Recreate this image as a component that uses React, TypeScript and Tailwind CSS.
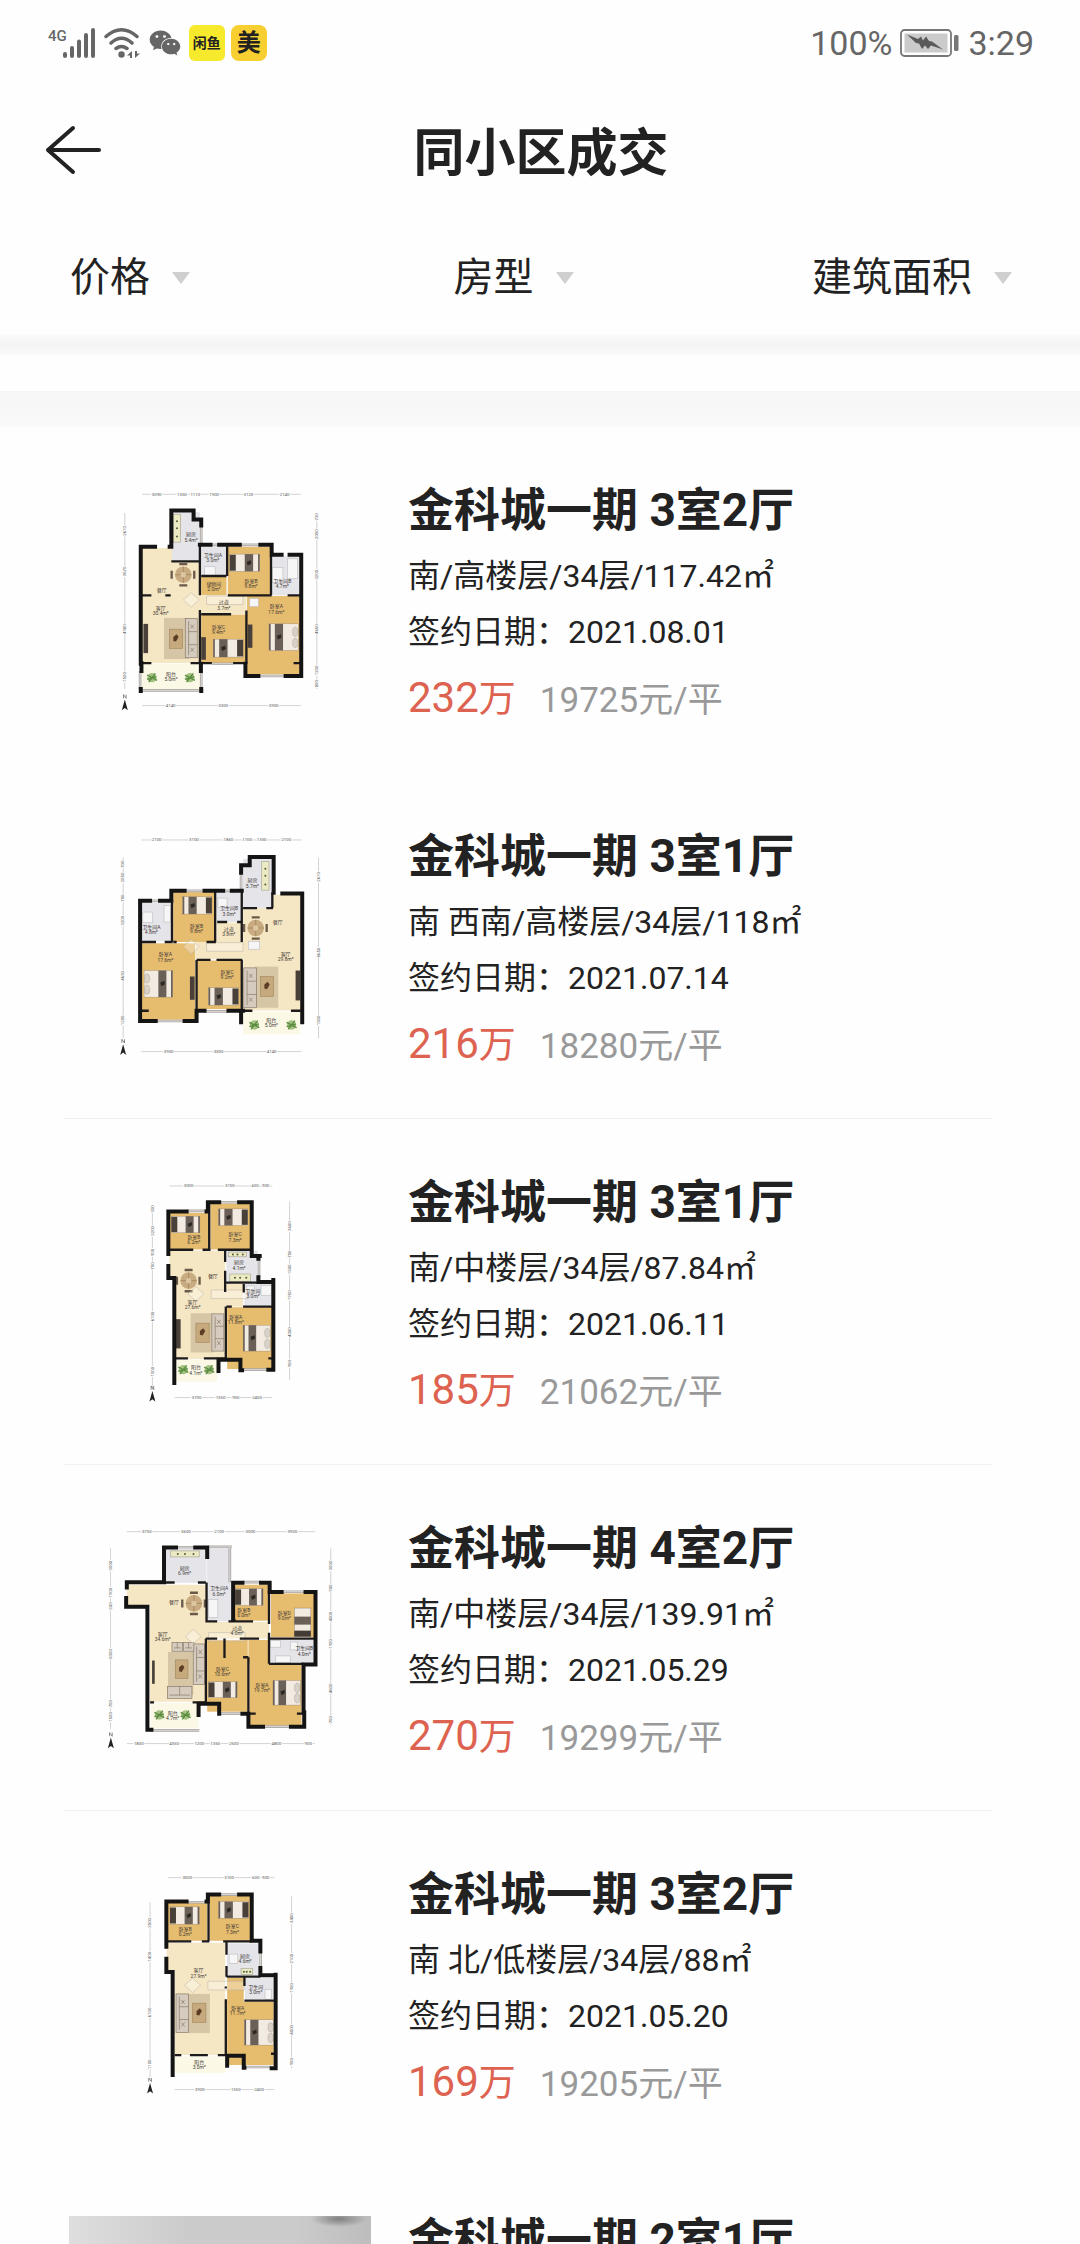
import { FaWeixin } from 'react-icons/fa'

type Box = [x: number, y: number, w: number, h: number]

type Plan = {
  viewBox: string
  // floor areas by finish
  living: Box[]
  wood: Box[]
  tile: Box[]
  balcony: Box[]
  walls: string
  thinWalls: string
  windows: string
  rugs: Box[]
  tables: Box[]
  sofas: Box[]
  // x, y, w, h and the side that the pillows are on
  beds: [number, number, number, number, 'l' | 'r' | 'b'][]
  counters: Box[]
  fittings: Box[]
  dining: [number, number][]
  plants: [number, number][]
  tvs: Box[]
  labels: [number, number, string, string?][]
  dims: string
  dimText: [number, number, string, boolean?][]
  north: [number, number]
  watermark: [number, number]
}

const plans: Record<string, Plan> = {
  a: {
    viewBox: '-96 45 909 684',
    living: [[124, 232, 178, 346], [300, 376, 138, 54]],
    wood: [[302, 318, 76, 56], [382, 228, 130, 146], [302, 432, 136, 148], [440, 376, 162, 236]],
    tile: [[214, 124, 84, 150], [302, 228, 76, 88], [512, 256, 86, 118]],
    balcony: [[122, 580, 178, 78]],
    walls:
      'M120 580V228H163M207 228H212V119H279V146H302V164M298 222H330M356 222H418M480 222H514V252H544M568 252H603V617H556M474 617H435V580M301 580V602M122 578V602M120 656V662M302 656V662',
    thinWalls:
      'M212 272H298M298 222V374M298 418V580M302 316H378M380 226V316M382 374H514M512 256V374M302 431H392M438 420V580M302 578H334M398 578H438M124 374H152M194 374H210M580 578H602M440 374H468M562 374H602M124 578H152M270 578H300',
    windows: 'M120 660H302M330 222H356M418 222H480M302 164V218M474 617H556M334 580H398M118 602V656M302 602V656',
    rugs: [[190, 442, 76, 124]],
    tables: [[206, 476, 40, 58]],
    sofas: [[254, 444, 36, 118]],
    beds: [[388, 250, 90, 52, 'l'], [338, 506, 90, 54, 'r'], [506, 460, 88, 80, 'r']],
    counters: [[218, 130, 22, 84]],
    fittings: [[312, 288, 32, 26], [516, 290, 32, 46], [562, 264, 30, 60], [448, 384, 26, 24]],
    dining: [[248, 312]],
    plants: [[154, 622], [268, 622]],
    tvs: [[128, 460, 14, 88], [302, 500, 14, 68], [442, 462, 14, 70]],
    labels: [
      [271, 192, '厨房', '5.4m²'],
      [337, 254, '卫生间A', '3.0m²'],
      [183, 358, '餐厅'],
      [180, 412, '客厅', '30.4m²'],
      [340, 340, '储物间', '2.0m²'],
      [370, 396, '过道', '3.7m²'],
      [452, 332, '卧室B', '9.8m²'],
      [546, 332, '卫生间B', '4.7m²'],
      [528, 408, '卧室A', '17.6m²'],
      [354, 470, '卧室C', '9.4m²'],
      [211, 612, '阳台', '5.0m²'],
    ],
    dims: 'M124 70H602M124 706H602M72 126V656M650 126V656',
    dimText: [
      [168, 70, '3090'], [244, 70, '1350'], [284, 70, '1110'], [341, 70, '1900'], [444, 70, '3120'], [553, 70, '2140'],
      [210, 706, '4140'], [368, 706, '3300'], [520, 706, '3900'],
      [72, 180, '2610', true], [72, 302, '3670', true], [72, 476, '4980', true], [72, 620, '1500', true],
      [650, 138, '730', true], [650, 190, '2050', true], [650, 312, '3200', true], [650, 476, '4650', true], [650, 600, '1200', true], [650, 640, '800', true],
    ],
    north: [72, 706],
    watermark: [272, 388],
  },
  b: {
    viewBox: '-96 33 909 684',
    living: [[428, 222, 176, 348], [286, 364, 144, 52], [348, 306, 76, 62]],
    wood: [[218, 214, 124, 150], [122, 368, 162, 230], [290, 420, 134, 146]],
    tile: [[428, 114, 88, 148], [120, 244, 92, 118], [348, 214, 76, 90]],
    balcony: [[428, 574, 172, 68]],
    walls:
      'M422 156V133H448V108H520V216M546 218H606V606M118 364V240H148M178 240H212V210H252M312 210H368M394 210H424M118 362V602H165M252 602H288V571H312M384 571H422V606M422 571H428',
    thinWalls:
      'M428 262H470M498 262H518M516 214V262M424 210V364M344 212V364M218 364H228M214 236V364M318 364H346M120 364H166M192 364H216M288 418H330M348 418H426M288 418V570M424 418V570M350 304H380M410 304H424M122 571H144M428 571H456M572 571H602',
    windows: 'M422 156V206M252 210H312M148 240H178M368 210H394M165 602H252M312 573H384',
    rugs: [[464, 438, 70, 124]],
    tables: [[480, 468, 40, 60]],
    sofas: [[430, 442, 38, 120]],
    beds: [[246, 228, 88, 52, 'r'], [324, 502, 90, 52, 'r'], [130, 450, 86, 80, 'l']],
    counters: [[484, 122, 22, 86]],
    fittings: [[126, 274, 30, 32], [190, 254, 20, 50], [352, 232, 28, 28], [444, 362, 34, 24]],
    dining: [[466, 322]],
    plants: [[462, 614], [574, 614]],
    tvs: [[586, 450, 14, 90], [268, 468, 14, 70]],
    labels: [
      [456, 180, '厨房', '5.7m²'],
      [386, 264, '卫生间B', '3.0m²'],
      [532, 304, '餐厅'],
      [385, 326, '过道', '3.8m²'],
      [288, 316, '卧室B', '9.8m²'],
      [152, 320, '卫生间A', '4.8m²'],
      [194, 402, '卧室A', '17.6m²'],
      [380, 456, '卧室C', '9.2m²'],
      [556, 400, '客厅', '29.8m²'],
      [513, 600, '阳台', '5.0m²'],
    ],
    dims: 'M122 57H604M122 694H604M67 110V654M655 110V654',
    dimText: [
      [168, 57, '2100'], [280, 57, '3100'], [384, 57, '1860'], [440, 57, '1100'], [484, 57, '1350'], [558, 57, '2100'],
      [204, 694, '3900'], [354, 694, '3300'], [514, 694, '4140'],
      [67, 130, '700', true], [67, 170, '2050', true], [67, 232, '700', true], [67, 300, '3200', true], [67, 466, '4650', true], [67, 600, '1200', true],
      [655, 168, '2610', true], [655, 396, '8650', true], [655, 600, '1500', true],
    ],
    north: [67, 690],
    watermark: [272, 378],
  },
  c: {
    viewBox: '-96 51 909 684',
    living: [[222, 270, 152, 326], [206, 270, 24, 84], [374, 370, 54, 68]],
    wood: [[208, 156, 116, 110], [330, 128, 122, 138], [380, 440, 136, 186]],
    tile: [[378, 270, 94, 96], [432, 370, 84, 66]],
    balcony: [[226, 598, 124, 66]],
    walls:
      'M203 280V152H258M318 152H322V124H356M416 124H454V286H478M474 286V294M474 350V364H516M203 316V352H221V668M519 358V628H504M425 630H420V598H354V632',
    thinWalls:
      'M206 267H278M306 267H330M326 128V267M352 267H454M374 267V304M374 330V394M376 366H474M378 438H394M428 438H516M430 370V396M376 438V596M226 594H262M310 594H376M504 594H518',
    windows: 'M258 150H322M356 124H416M476 294V350M425 628H504M484 362H516',
    rugs: [[270, 458, 72, 118]],
    tables: [[286, 488, 40, 58]],
    sofas: [[334, 460, 36, 112]],
    beds: [[212, 166, 86, 50, 'l'], [354, 144, 88, 50, 'r'], [428, 494, 82, 78, 'r']],
    counters: [[388, 340, 62, 22], [384, 274, 54, 14]],
    fittings: [[482, 374, 32, 30], [438, 376, 24, 20]],
    dining: [[264, 360]],
    plants: [[248, 628], [326, 628]],
    tvs: [[226, 476, 14, 88]],
    labels: [
      [280, 230, '卧室B', '6.2m²'],
      [404, 222, '卧室C', '7.3m²'],
      [416, 306, '厨房', '4.1m²'],
      [337, 348, '餐厅'],
      [276, 424, '客厅', '27.6m²'],
      [458, 392, '卫生间', '3.0m²'],
      [406, 470, '卧室A', '11.8m²'],
      [286, 622, '阳台', '4.1m²'],
    ],
    dims: 'M206 75H516M222 712H516M155 134V688M568 122V660',
    dimText: [
      [264, 75, '3000'], [388, 75, '3100'], [464, 75, '600'], [496, 75, '900'],
      [288, 712, '3700'], [360, 712, '1350'], [406, 712, '900'], [470, 712, '2400'],
      [155, 144, '300', true], [155, 210, '3200', true], [155, 275, '900', true], [155, 316, '700', true], [155, 468, '6100', true], [155, 634, '1500', true],
      [568, 196, '3600', true], [568, 280, '700', true], [568, 326, '1500', true], [568, 404, '1950', true], [568, 515, '4000', true], [568, 610, '900', true],
    ],
    north: [155, 710],
    watermark: [286, 400],
  },
  d: {
    viewBox: '-66 39 909 684',
    living: [[178, 222, 170, 352], [108, 222, 74, 62], [346, 334, 190, 50]],
    wood: [[428, 222, 106, 108], [542, 248, 130, 132], [350, 388, 122, 216], [474, 388, 62, 70], [478, 440, 156, 206]],
    tile: [[226, 114, 122, 102], [350, 114, 72, 218], [538, 388, 134, 70]],
    balcony: [[180, 578, 144, 76]],
    walls:
      'M108 230V214H220V110H256M314 110H350V138M106 262V288H170V658H182M428 328V216H456M512 216H538V244H574M646 244H676V462H640V606M642 606V649H602M518 649H474V610M472 610H456M386 610V580H348M324 580V614M386 580H324',
    thinWalls:
      'M222 215H252M322 215H346M348 215V332H380M414 332H488M536 240V340M536 366V460M538 384H674M346 384V580M346 384H380M402 384V442M448 384H506M458 440H474M474 440V610M536 460H640M178 576H190M306 576H346M620 610H640M478 610H496M428 330H436',
    windows: 'M256 109H314M352 108H424M418 108V214M456 214H512M574 243H646M518 649H602M386 610H456M182 660H326',
    rugs: [[232, 424, 76, 130]],
    tables: [[254, 448, 38, 56]],
    sofas: [[308, 400, 34, 122], [244, 396, 32, 26], [278, 396, 32, 26], [230, 528, 74, 36]],
    beds: [[434, 234, 84, 50, 'l'], [354, 514, 86, 48, 'l'], [612, 292, 50, 86, 'b'], [548, 510, 82, 74, 'r']],
    counters: [[240, 120, 86, 18]],
    fittings: [[354, 266, 28, 54], [540, 390, 30, 20], [556, 436, 44, 20], [600, 394, 22, 24]],
    dining: [[310, 278]],
    plants: [[206, 614], [285, 614]],
    tvs: [[184, 450, 8, 70]],
    labels: [
      [282, 172, '厨房', '6.9m²'],
      [386, 234, '卫生间A', '6.0m²'],
      [460, 298, '卧室B', '6.0m²'],
      [582, 308, '卧室D', '9.0m²'],
      [250, 274, '餐厅'],
      [216, 370, '客厅', '34.6m²'],
      [440, 352, '过道', '4.0m²'],
      [642, 414, '卫生间B', '4.0m²'],
      [396, 476, '卧室C', '10.6m²'],
      [515, 524, '卧室A', '19.7m²'],
      [246, 608, '阳台', '4.7m²'],
    ],
    dims: 'M108 62H674M108 700H674M59 112V656M722 112V644',
    dimText: [
      [168, 62, '3750'], [286, 62, '3600'], [386, 62, '2100'], [480, 62, '3000'], [606, 62, '3900'],
      [144, 700, '1800'], [250, 700, '4350'], [326, 700, '1200'], [374, 700, '1350'], [430, 700, '2500'], [558, 700, '4800'], [654, 700, '900'],
      [59, 164, '3000', true], [59, 246, '1900', true], [59, 286, '300', true], [59, 430, '8300', true], [59, 580, '700', true], [59, 620, '1500', true],
      [722, 164, '3000', true], [722, 232, '900', true], [722, 318, '4000', true], [722, 400, '1900', true], [722, 534, '4600', true], [722, 628, '700', true],
    ],
    north: [60, 700],
    watermark: [308, 378],
  },
  e: {
    viewBox: '-96 27 909 684',
    living: [[222, 246, 152, 338], [198, 246, 30, 84]],
    wood: [[202, 126, 118, 114], [328, 104, 122, 136], [380, 352, 50, 76], [380, 424, 140, 190]],
    tile: [[380, 248, 96, 96], [434, 352, 88, 64]],
    balcony: [[222, 588, 154, 50]],
    walls:
      'M197 258V122H258M318 122H322V101H356M416 101H454V240H480V272M480 322V344H522M197 294V334H216V644M526 342V624H514M432 622H430V586H380V616',
    thinWalls:
      'M200 242H272M304 242H326M324 104V242M368 242H454M378 242V282M378 316V348M378 348H480M376 378V384M376 416V586M432 350V376M432 420H522M222 584H242M268 584H322M352 584H378M512 580H524',
    windows: 'M258 124H322M356 101H416M481 272V322M432 620H514M490 344H522',
    rugs: [[262, 400, 66, 118]],
    tables: [[276, 428, 40, 58]],
    sofas: [[226, 400, 38, 116]],
    beds: [[208, 138, 88, 52, 'l'], [354, 122, 90, 50, 'r'], [432, 478, 88, 76, 'r']],
    counters: [[422, 324, 34, 18]],
    fittings: [[386, 280, 26, 28], [494, 386, 20, 30]],
    dining: [],
    plants: [],
    tvs: [],
    labels: [
      [254, 206, '卧室B', '6.2m²'],
      [396, 198, '卧室C', '7.3m²'],
      [434, 286, '厨房', '4.6m²'],
      [294, 330, '客厅', '27.9m²'],
      [466, 380, '卫生间', '3.0m²'],
      [412, 444, '卧室A', '11.7m²'],
      [296, 606, '阳台', '3.0m²'],
    ],
    dims: 'M202 50H522M222 688H522M148 124V650M574 106V624',
    dimText: [
      [260, 50, '3000'], [386, 50, '3100'], [466, 50, '600'], [496, 50, '900'],
      [298, 688, '3900'], [406, 688, '1350'], [476, 688, '2400'],
      [148, 186, '3000', true], [148, 288, '1400', true], [148, 456, '6100', true], [148, 612, '1100', true],
      [574, 172, '3400', true], [574, 294, '2100', true], [574, 382, '1900', true], [574, 508, '4000', true], [574, 604, '900', true],
    ],
    north: [148, 686],
    watermark: [276, 374],
  },
}

const listings = [
  { id: 1, title: '金科城一期 3室2厅', info: '南/高楼层/34层/117.42㎡', date: '2021.08.01', total: '232', unit: '19725', plan: 'a', divider: false },
  { id: 2, title: '金科城一期 3室1厅', info: '南 西南/高楼层/34层/118㎡', date: '2021.07.14', total: '216', unit: '18280', plan: 'b', divider: true },
  { id: 3, title: '金科城一期 3室1厅', info: '南/中楼层/34层/87.84㎡', date: '2021.06.11', total: '185', unit: '21062', plan: 'c', divider: true },
  { id: 4, title: '金科城一期 4室2厅', info: '南/中楼层/34层/139.91㎡', date: '2021.05.29', total: '270', unit: '19299', plan: 'd', divider: true },
  { id: 5, title: '金科城一期 3室2厅', info: '南 北/低楼层/34层/88㎡', date: '2021.05.20', total: '169', unit: '19205', plan: 'e', divider: false },
]

const filters = ['价格', '房型', '建筑面积']

function Rects({ items, fill, stroke }: { items: Box[]; fill: string; stroke?: string }) {
  return items.map(([x, y, w, h]) => (
    <rect key={`${x}-${y}`} x={x} y={y} width={w} height={h} fill={fill} stroke={stroke} strokeWidth={stroke ? 2 : 0} />
  ))
}

function Bed({ x, y, w, h, side }: { x: number; y: number; w: number; h: number; side: 'l' | 'r' | 'b' }) {
  if (side === 'b') {
    return (
      <g>
        <rect x={x} y={y} width={w} height={h} fill="#f1ebe2" stroke="#6b5f52" strokeWidth="1" />
        <rect x={x} y={y + h * 0.3} width={w} height={h * 0.28} fill="#6a6057" />
        <rect x={x} y={y + h - 18} width={w} height="18" fill="#433b35" />
      </g>
    )
  }
  const wide = h > 60
  const pillow = side === 'l' ? x : x + w - 18
  const blanket = side === 'l' ? x + w * 0.5 : x + w * 0.2
  return (
    <g>
      <rect x={x} y={y} width={w} height={h} fill="#f1ebe2" stroke="#8a7a66" strokeWidth="1" />
      <rect x={blanket} y={y} width={w * 0.28} height={h} fill="#6a6057" />
      <rect x={side === 'l' ? x + w - 5 : x} y={y} width="5" height={h} fill="#6a6057" />
      {wide ? (
        <>
          <ellipse cx={pillow + 9} cy={y + h * 0.3} rx="8" ry="14" fill="#d9d2c8" stroke="#8f8578" />
          <ellipse cx={pillow + 9} cy={y + h * 0.72} rx="8" ry="14" fill="#d9d2c8" stroke="#8f8578" />
        </>
      ) : (
        <rect x={pillow} y={y + 2} width="18" height={h - 4} fill="#4a403a" />
      )}
      <path d={`M${blanket + 6} ${y + h * 0.45}l12 -5 2 10 -11 6z`} fill="#2c2825" />
    </g>
  )
}

function FloorPlan({ plan, title }: { plan: Plan; title: string }) {
  const [nx, ny] = plan.north
  const [mx, my] = plan.watermark
  return (
    <svg viewBox={plan.viewBox} role="img" aria-label={`${title} 户型图`} className="block w-full">
      <Rects items={plan.living} fill="#f6e7c4" />
      <Rects items={plan.wood} fill="#e6bc6e" />
      <Rects items={plan.tile} fill="#e4e4e9" />
      <Rects items={plan.balcony} fill="#fbf8e6" />
      <Rects items={plan.rugs} fill="#d6c6a6" />
      <Rects items={plan.tables} fill="#c6aa7e" stroke="#a58a60" />
      {plan.tables.map(([x, y, w, h]) => (
        <path key={x} d={`M${x + w * 0.3} ${y + h * 0.4}l10 -8 6 8 -8 14 -8 -2z`} fill="#5b3d26" />
      ))}
      <Rects items={plan.sofas} fill="#d6cbbf" stroke="#857767" />
      {plan.sofas.map(([x, y, w, h]) => (
        <path
          key={`${x}-${y}`}
          d={
            h > w
              ? `M${x + 10} ${y + 8}V${y + h - 8}M${x + 10} ${y + h / 3}h${w - 10}M${x + 10} ${y + (h * 2) / 3}h${w - 10}M${x + 16} ${y + 18}l10 12m0 -12l-10 12M${x + 16} ${y + h - 30}l10 12m0 -12l-10 12`
              : `M${x + 6} ${y + h - 10}h${w - 12}M${x + w / 2} ${y}v${h - 10}`
          }
          fill="none"
          stroke="#857767"
          strokeWidth="2"
        />
      ))}
      {plan.beds.map(([x, y, w, h, side]) => (
        <Bed key={`${x}-${y}`} x={x} y={y} w={w} h={h} side={side} />
      ))}
      <Rects items={plan.counters} fill="#eceac2" stroke="#a9a690" />
      {plan.counters.map(([x, y, w, h]) => (
        <g key={`${x}-${y}`} fill="#4f5b3c">
          <circle cx={x + w * 0.5} cy={y + h * 0.5} r="3" />
          <circle cx={h > w ? x + w * 0.5 : x + w * 0.25} cy={h > w ? y + h * 0.25 : y + h * 0.5} r="3" />
          <circle cx={h > w ? x + w * 0.5 : x + w * 0.8} cy={h > w ? y + h * 0.8 : y + h * 0.5} r="3" />
        </g>
      ))}
      <Rects items={plan.fittings} fill="#f6f6f6" stroke="#c0c0c4" />
      {plan.dining.map(([x, y]) => (
        <g key={x}>
          <path d={`M${x - 12} ${y - 32}h24M${x - 12} ${y + 32}h24M${x - 35} ${y - 12}v24M${x + 33} ${y - 12}v24`} stroke="#6b5a49" strokeWidth="7" />
          <circle cx={x} cy={y} r="25" fill="#c8ab80" />
          <path d={`M${x - 24} ${y}h48M${x} ${y - 24}v48`} stroke="#a98b64" strokeWidth="3" />
          <circle cx={x} cy={y} r="8" fill="#dcc6a0" />
        </g>
      ))}
      {plan.plants.map(([x, y]) => (
        <g key={x}>
          <circle cx={x} cy={y} r="14" fill="#a3c281" />
          <path d={`M${x - 15} ${y - 8}l30 16M${x - 10} ${y + 13}l20 -26M${x - 15} ${y + 5}l28 -8`} stroke="#5c8c42" strokeWidth="4" />
        </g>
      ))}
      <Rects items={plan.tvs} fill="#49403a" />
      <path
        d={`M${mx - 24} ${my}l24 -22 24 22 -24 22zM${mx + 46} ${my - 12}h110v26h-110z`}
        fill="#ffffff"
        fillOpacity="0.3"
        stroke="#b8b0a4"
        strokeOpacity="0.5"
        strokeWidth="3"
      />
      <path d={plan.windows} fill="none" stroke="#a9a5a3" strokeWidth="8" />
      <path d={plan.windows} fill="none" stroke="#dedcda" strokeWidth="3" />
      <path d={plan.thinWalls} fill="none" stroke="#1c1a1a" strokeWidth="7" />
      <path d={plan.walls} fill="none" stroke="#151415" strokeWidth="12" strokeLinecap="square" />
      <path d={plan.dims} fill="none" stroke="#bdbdbd" strokeWidth="2" />
      <g fontSize="13" textAnchor="middle" fill="#555555">
        {plan.dimText.map(([x, y, value, upright]) => (
          <text key={`${x}-${y}`} x={x} y={y + 4} transform={upright ? `rotate(-90 ${x} ${y})` : undefined} stroke="#ffffff" strokeWidth="5" paintOrder="stroke">
            {value}
          </text>
        ))}
      </g>
      <g fontSize="15" textAnchor="middle" fill="#3f3a38">
        {plan.labels.map(([x, y, name, area]) => (
          <text key={`${x}-${y}`} x={x} y={y + 5}>
            {name}
            {area && (
              <tspan x={x} dy="16">
                {area}
              </tspan>
            )}
          </text>
        ))}
      </g>
      <path d={`M${nx} ${ny - 18}l9 32 -9 -7 -9 7z`} fill="#222" />
      <path d={`M${nx - 4} ${ny - 22}v-11l8 11v-11`} fill="none" stroke="#555" strokeWidth="2" />
    </svg>
  )
}

function StatusBar() {
  return (
    <div className="flex h-[86px] items-center justify-between pr-[46px] pl-12 text-[#666]">
      <div className="flex items-center">
        <div className="flex h-8 items-start">
          <span className="text-[15px] leading-[18px] font-medium">4G</span>
          <svg viewBox="0 0 32 32" aria-hidden="true" className="-ml-1 size-8">
            <path d="M3 27v2M10 21v8M17 14.500v14.500M24 8v21M31 3v26" transform="translate(-1 0)" stroke="#666" strokeWidth="4" strokeLinecap="round" />
          </svg>
        </div>
        <svg viewBox="0 0 38 32" aria-hidden="true" className="ml-2 h-8 w-[38px]">
          <path d="M3 9.500Q18.500 -4 34 9.500M8 16Q18.500 6.500 29 16M13 21.500Q18.500 17.500 24 21.500" fill="none" stroke="#666" strokeWidth="3.500" strokeLinecap="round" />
          <circle cx="18.500" cy="27.500" r="3.200" fill="#666" />
          <path d="M29 24v7h-2v-2.500h-3zM32 31v-7h2v2.500h3z" fill="#666" />
        </svg>
        <FaWeixin className="ml-2 size-8" aria-hidden="true" />
        <span className="ml-2 flex size-9 items-center justify-center rounded-md bg-[#f7e92b] text-[14px] leading-none font-bold text-[#222]">闲鱼</span>
        <span className="ml-1.5 flex size-9 items-center justify-center rounded-lg bg-[#f8cf31] text-[24px] leading-none font-bold text-[#222]">美</span>
      </div>
      <div className="flex items-center text-[34px] leading-none">
        <span>100%</span>
        <svg viewBox="0 0 60 28" role="img" aria-label="充电中" className="mx-2 h-7 w-15">
          <rect x="1" y="1" width="50" height="26" rx="3.500" fill="#fff" stroke="#777" strokeWidth="1.800" />
          <rect x="4.500" y="4.500" width="43" height="19" fill="#cbcbcb" />
          <path d="M7 5.500l11 4.500 3 -2.500 2 4 3 -4 3 4.500 3 0.500 11 8 -12 -4 -3 3.500 -3 -3.500 -3 3.500 -3 -5.500 -3 -0.500z" fill="#5a5a5a" />
          <rect x="54" y="6" width="4.500" height="16" rx="1.500" fill="#777" />
        </svg>
        <span>3:29</span>
      </div>
    </div>
  )
}

export default function App() {
  return (
    <div className="h-screen overflow-hidden bg-[#fefefe] font-[Roboto,'Noto_Sans_CJK_SC',sans-serif] text-[#222]">
      <StatusBar />
      <header className="grid grid-cols-[1fr_auto_1fr] items-start px-11 pt-7">
        <button type="button" aria-label="返回" className="mt-[11px] w-15">
          <svg viewBox="0 0 60 50" className="h-[50px] w-15" fill="none" stroke="#222" strokeWidth="4" strokeLinecap="round" strokeLinejoin="round">
            <path d="M55 25H4M29 3L4 25L29 47" />
          </svg>
        </button>
        <h1 className="pl-0.5 text-[51px] leading-[80px] font-bold">同小区成交</h1>
      </header>

      <nav className="grid grid-cols-[383fr_358fr_auto] pt-[49px] pr-17 pb-[22px] pl-[70px]">
        {filters.map((label) => (
          <button key={label} type="button" aria-haspopup="listbox" className="flex items-center gap-[22px] text-[40px] leading-[70px]">
            {label}
            <svg viewBox="0 0 18 12" className="h-3 w-[18px]" aria-hidden="true">
              <path d="M0 0h18l-9 12z" fill="#cfcfcf" />
            </svg>
          </button>
        ))}
      </nav>
      <div className="h-5 bg-linear-to-b from-[#fafafa] via-[#f4f4f4] to-[#fafafa]" />
      <div className="mt-9 h-9 bg-linear-to-b from-[#f6f6f6] via-[#f8f8f8] to-[#fafafa]" />

      <main>
        <ul>
          {listings.map((item) => (
            <li key={item.id} className="pr-[88px] pl-16">
              <a
                href={`#listing-${item.id}`}
                className={`flex h-[346px] items-start gap-[37px] border-b pt-[59px] pl-[5px] ${item.divider ? 'border-[#f1f1f1]' : 'border-transparent'}`}
              >
                <div className="w-[302px] shrink-0">
                  <FloorPlan plan={plans[item.plan]} title={item.title} />
                </div>
                <div className="whitespace-nowrap">
                  <h2 className="text-[46px] leading-[48px] font-bold">{item.title}</h2>
                  <p className="mt-3.5 text-[32px] leading-[56px]">{item.info}</p>
                  <p className="text-[32px] leading-[56px]">签约日期：{item.date}</p>
                  <p className="mt-3 flex items-baseline gap-6 leading-[52px]">
                    <span className="text-[42px] text-[#dd6250]">
                      {item.total}
                      <span className="text-[37px]">万</span>
                    </span>
                    <span className="text-[35px] text-[#999]">{item.unit}元/平</span>
                  </p>
                </div>
              </a>
            </li>
          ))}
          <li className="pr-[88px] pl-16">
            <a href="#listing-6" className="flex items-start gap-[37px] pt-[59px] pl-[5px]">
              <div className="h-[228px] w-[302px] shrink-0 bg-[radial-gradient(ellipse_28px_8px_at_270px_3px,#808080,transparent),linear-gradient(to_right,#dedede,#cbcbcb_40%,#cbcbcb_75%,#bdbdbd)]" />
              <h2 className="text-[46px] leading-[48px] font-bold whitespace-nowrap">金科城一期 2室1厅</h2>
            </a>
          </li>
        </ul>
      </main>
    </div>
  )
}
